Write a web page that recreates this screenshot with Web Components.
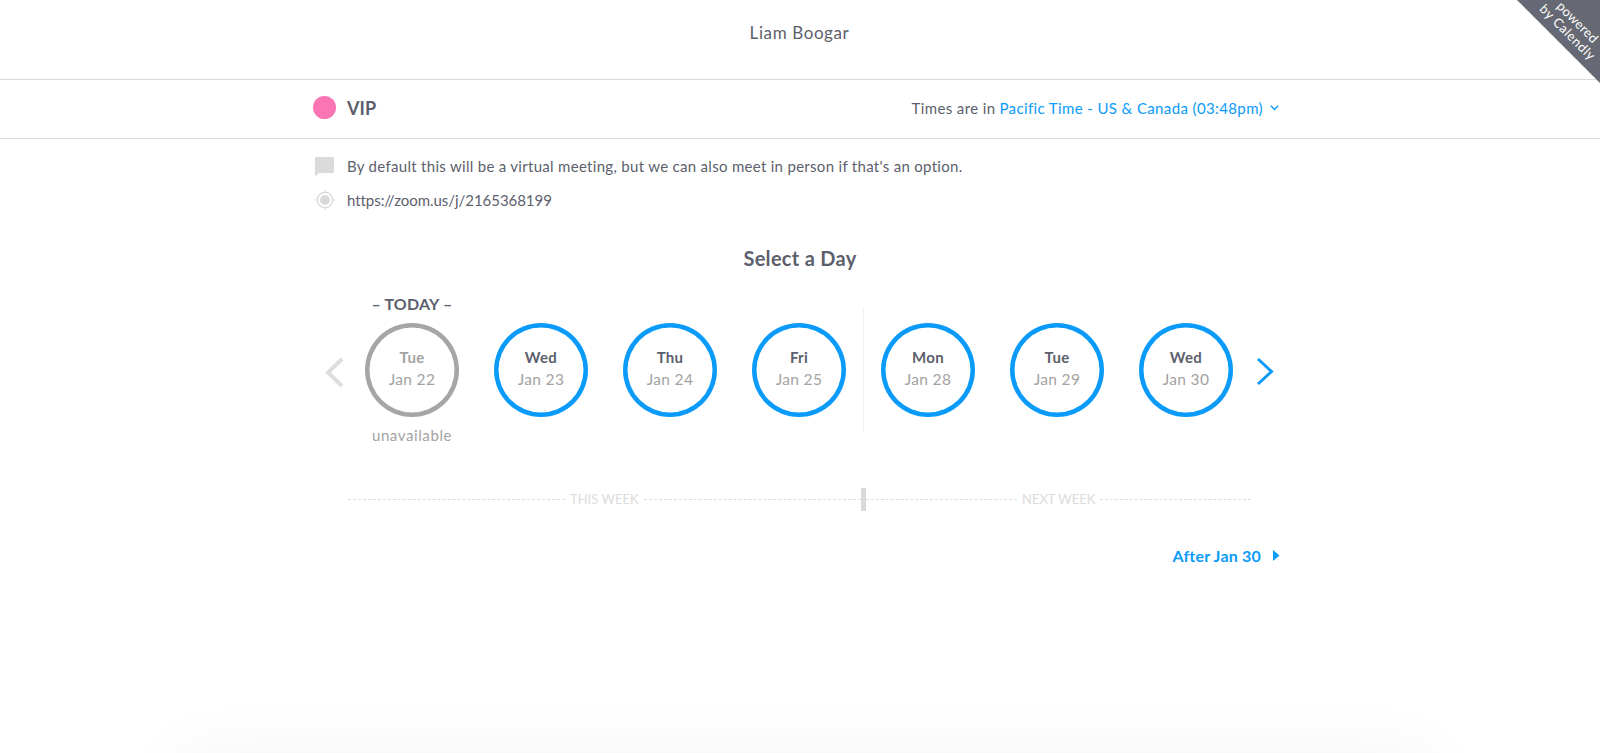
<!doctype html>
<html><head><meta charset="utf-8"><title>Liam Boogar</title>
<style>
html,body{margin:0;height:100%;background:#fff;overflow:hidden}
body{font-family:Lato,"Open Sans",sans-serif;color:#5c5f6c;position:relative}
</style></head><body>
<cal-header>Liam Boogar</cal-header>
<cal-event-bar name="VIP"><span slot="tz">Pacific Time - US &amp; Canada (03:48pm)</span></cal-event-bar>
<cal-content>
  <cal-info icon="chat">By default this will be a virtual meeting, but we can also meet in person if that's an option.</cal-info>
  <cal-info icon="target" style="letter-spacing:-.05px">https://zoom.us/j/2165368199</cal-info>
  <cal-title>Select a Day</cal-title>
  <cal-days>
    <cal-day today unavailable day="Tue" date="Jan 22"></cal-day>
    <cal-day day="Wed" date="Jan 23"></cal-day>
    <cal-day day="Thu" date="Jan 24"></cal-day>
    <cal-day day="Fri" date="Jan 25" divider></cal-day>
    <cal-day day="Mon" date="Jan 28"></cal-day>
    <cal-day day="Tue" date="Jan 29"></cal-day>
    <cal-day day="Wed" date="Jan 30"></cal-day>
  </cal-days>
  <cal-weeks></cal-weeks>
  <cal-after>After Jan 30</cal-after>
</cal-content>
<cal-ribbon></cal-ribbon>
<cal-shadow></cal-shadow>
<script>
function def(name,html,cls){
  const t=document.createElement('template');t.innerHTML=html;
  customElements.define(name,class extends HTMLElement{
    constructor(){super();this.attachShadow({mode:'open'}).appendChild(t.content.cloneNode(true));}
    connectedCallback(){cls&&cls.call(this,this.shadowRoot);}
  });
}
def('cal-header',`<style>:host{display:flex;height:79px;border-bottom:1px solid #d9d9d9;align-items:center;justify-content:center;font-size:17px;letter-spacing:.6px;color:#5c5f6c;padding-right:1px}
span{padding-bottom:15px}</style><span><slot></slot></span>`);
def('cal-event-bar',`<style>:host{display:block;border-bottom:1px solid #d9d9d9}
.in{width:1000px;margin:0 auto;box-sizing:border-box;height:58px;padding:0 21px 3px 13px;display:flex;align-items:center}
.dot{width:23px;height:23px;border-radius:50%;background:#fb75b5;margin-right:11px;flex:none}
b{font-size:18px;font-weight:700;letter-spacing:.1px;color:#5c5f6c}
.tz{margin-left:auto;font-size:15px;letter-spacing:.38px;display:flex;align-items:center;color:#5c5f6c}
.tz a{color:#0a9bfa;margin-left:4px}
svg{margin-left:7px;margin-top:1px}
</style><div class="in"><span class="dot"></span><b id="n"></b><div class="tz">Times are in <a><slot name="tz"></slot></a><svg width="9" height="6" viewBox="0 0 9 6"><path d="M.8.8 4.5 4.6 8.2.8" fill="none" stroke="#0a9bfa" stroke-width="1.4"/></svg></div></div>`,
function(r){r.getElementById('n').textContent=this.getAttribute('name');});
def('cal-content',`<style>:host{display:block;width:1000px;margin:0 auto;box-sizing:border-box;padding:10px 20px 0 13px}</style><slot></slot>`);
def('cal-info',`<style>:host{display:flex;align-items:center;height:34px;font-size:15px;letter-spacing:.3px;color:#5c5f6c}
.i{width:34px;flex:none;display:flex}
</style><span class="i" id="i"></span><span><slot></slot></span>`,
function(r){
 r.getElementById('i').innerHTML=this.getAttribute('icon')==='chat'
 ?`<svg width="19" height="19" viewBox="0 0 19 19" style="margin-left:2px"><path d="M1 0H18A1 1 0 0 1 19 1V15A1 1 0 0 1 18 16H4L.8 19C.4 19.2 0 19 0 18.5V1A1 1 0 0 1 1 0Z" fill="#dadada"/></svg>`
 :`<svg width="20" height="20" viewBox="0 0 20 20" style="margin-left:2px"><circle cx="10" cy="10" r="5" fill="#dadada"/><circle cx="10" cy="10" r="7.7" fill="none" stroke="#dadada" stroke-width="1.3"/><path d="M10 0V3M10 17V20M0 10H3M17 10H20" stroke="#dadada" stroke-width="1.1"/></svg>`;
});
def('cal-title',`<style>:host{display:block;text-align:center;font-size:20px;font-weight:700;letter-spacing:.3px;margin:22px 0 0;height:39px;line-height:39px;padding-left:7px;color:#5c5f6c}</style><slot></slot>`);
def('cal-days',`<style>:host{display:flex;align-items:flex-start;height:160px;margin-top:15px}
svg{flex:none}
.l{margin-left:11px;margin-right:2.5px;margin-top:63px}
.d{display:flex;width:903px;flex:none}
.r{margin-left:5px;margin-top:64px}
</style><svg class="l" width="21" height="33" viewBox="0 0 21 33"><path d="M18 3 4 16.5 18 30" fill="none" stroke="#dedede" stroke-width="4"/></svg><div class="d"><slot></slot></div><svg class="r" width="20" height="29" viewBox="0 0 20 29"><path d="M2 2 15.5 14.5 2 27" fill="none" stroke="#0a9bfa" stroke-width="3"/></svg>`);
def('cal-day',`<style>:host{display:flex;flex-direction:column;align-items:center;width:129px;flex:none;position:relative;box-sizing:border-box}
.t{height:23px;line-height:21px;font-size:16px;font-weight:700;letter-spacing:.2px;white-space:nowrap;color:#5c5f6c;visibility:hidden}
.c{width:94px;height:94px;box-sizing:border-box;box-shadow:inset 0 0 0 4.5px #0a9bfa;border-radius:50%;display:flex;flex-direction:column;align-items:center;justify-content:center;margin-top:7px;padding-bottom:3px}
.a{font-size:15px;font-weight:700;letter-spacing:.3px;line-height:21.5px;color:#5c5f6c}
.b{font-size:15.5px;letter-spacing:.3px;line-height:21.5px;color:#a3a3a3}
.u{font-size:15px;letter-spacing:.6px;color:#a3a3a3;line-height:20px;margin-top:8px;visibility:hidden}
:host([unavailable]) .c{box-shadow:inset 0 0 0 4.5px #a6a6a6}
:host([unavailable]) .a{color:#a3a3a3}
:host([unavailable]) .u,:host([today]) .t{visibility:visible}
.v{display:none;position:absolute;right:0;top:14px;height:126px;width:1px;background:#f1f1f1}
:host([divider]) .v{display:block}
</style><div class="t">– TODAY –</div><div class="c"><span class="a" id="a"></span><span class="b" id="b"></span></div><div class="u">unavailable</div><i class="v"></i>`,
function(r){r.getElementById('a').textContent=this.getAttribute('day');r.getElementById('b').textContent=this.getAttribute('date');});
def('cal-weeks',`<style>:host{display:flex;align-items:center;height:24px;margin:34px 0 0 35px;width:903px;font-size:13px;color:#dcdcdc}
i{flex:1;border-top:1px dashed #dcdcdc;height:0;margin-top:1px}
.s{margin:0 5px}
.k{width:5px;height:23px;background:#d9d9d9;flex:none}
.w{display:flex;align-items:center;min-width:0}
.w i:first-child{flex:0 0 auto}
</style><div class="w" style="flex:0 0 513px"><i style="width:217px"></i><span class="s">THIS WEEK</span><i></i></div><span class="k"></span><div class="w" style="flex:1"><i style="width:151px"></i><span class="s">NEXT WEEK</span><i></i></div>`);
def('cal-after',`<style>:host{display:flex;justify-content:flex-end;align-items:center;font-size:16px;font-weight:700;letter-spacing:.2px;color:#0a9bfa;height:20px;margin-top:34px}
svg{margin-left:12px}</style><slot></slot><svg width="7" height="11" viewBox="0 0 7 11"><path d="M0 0 6.5 5.5 0 11Z" fill="#0a9bfa"/></svg>`);
def('cal-ribbon',`<style>:host{position:absolute;top:0;right:0;width:83px;height:83px;display:block}
svg{position:absolute;inset:0}
span{position:absolute;color:#fff;font-size:13px;line-height:10px;white-space:nowrap;transform:translate(-50%,-50%) rotate(45deg);letter-spacing:.6px}
</style><svg width="83" height="83"><path d="M0 0H83V83Z" fill="#666973"/></svg><span style="left:61px;top:21.5px;letter-spacing:.3px">powered</span><span style="left:51px;top:32px">by Calendly</span>`);
def('cal-shadow',`<style>:host{position:absolute;left:0;bottom:0;width:100%;height:60px;overflow:hidden;display:block;pointer-events:none}
div{position:absolute;left:175px;width:1260px;top:64px;height:80px;border-radius:30px;box-shadow:0 0 70px rgba(0,0,0,.055)}</style><div></div>`);
</script>
</body></html>
